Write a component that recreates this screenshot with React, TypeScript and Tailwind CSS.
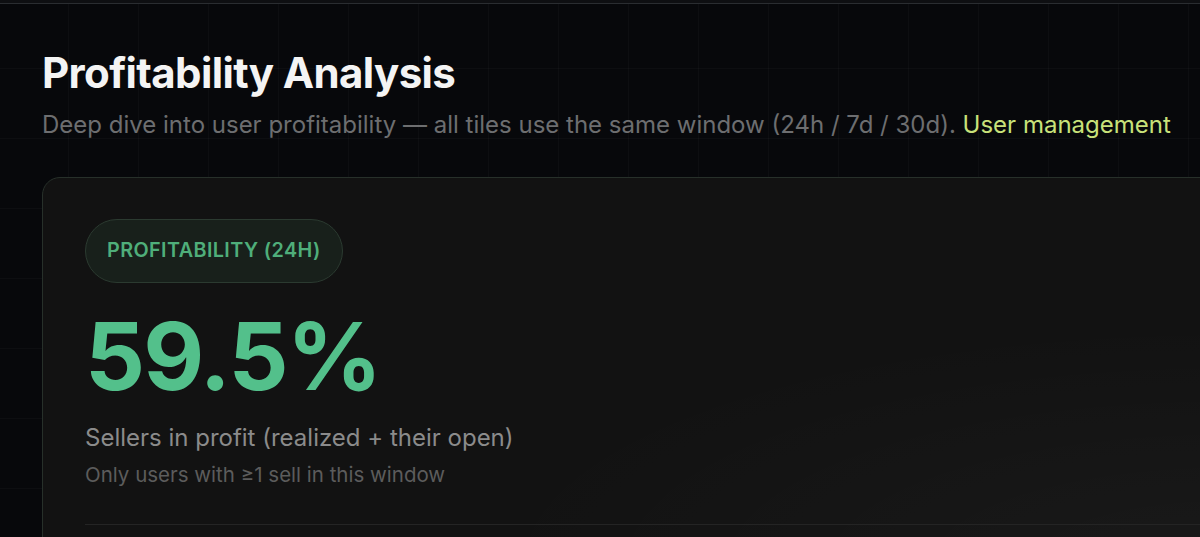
import React from "react";

export default function App() {
  return (
    <div
      className="relative h-[537px] w-[1200px] overflow-hidden bg-[#07080b] bg-[linear-gradient(to_right,rgba(255,255,255,0.025)_1px,transparent_1px),linear-gradient(to_bottom,rgba(255,255,255,0.025)_1px,transparent_1px)] bg-[size:70px_70px] bg-[position:-2px_-2px]"
      style={{ fontFamily: "Inter, 'Noto Sans', sans-serif" }}
    >
      <div className="h-[4px] border-b border-[#2a2d31] bg-[#0e0f12]" />
      <div className="px-[42px]">
        <h1 className="mt-[44px] text-[42px] font-bold leading-[50px] tracking-[-0.015em] text-[#f4f4f4]">
          Profitability Analysis
        </h1>
        <p className="mt-[12px] whitespace-nowrap text-[24px] leading-[30px] text-[#6d6e70]">
          Deep dive into user profitability — all tiles use the same window (24h / 7d / 30d).{" "}
          <span className="text-[#c9e27a]">User management</span>
        </p>
        <div className="mt-[37px] w-[1250px] rounded-[18px] border border-[#27302a] bg-[#121212] px-[42px] pt-[41px] pb-[40px] bg-[radial-gradient(ellipse_at_95%_100%,rgba(255,255,255,0.03),transparent_45%)]">
          <div className="inline-flex h-[64px] items-center rounded-full border border-[#2b3a30] bg-[#18201b] px-[21px]">
            <span className="text-[19.8px] font-semibold tracking-[0.02em] text-[#4fae7a]">
              PROFITABILITY (24H)
            </span>
          </div>
          <div className="mt-[23px] text-[94px] font-bold leading-[100px] tracking-[-0.02em] text-[#53c08b]">
            59.5%
          </div>
          <div className="mt-[17px] text-[24px] leading-[30px] text-[#8b8b8b]">
            Sellers in profit (realized + their open)
          </div>
          <div className="mt-[9px] text-[20.5px] leading-[26px] text-[#5c5c5c]">
            Only users with ≥1 sell in this window
          </div>
          <div className="mt-[36px] h-px bg-[#242424]" />
        </div>
      </div>
    </div>
  );
}
